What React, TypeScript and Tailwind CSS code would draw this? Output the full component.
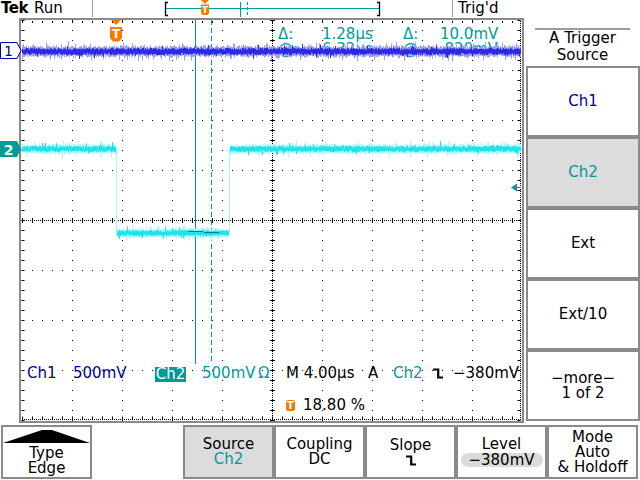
import React from "react";

const TEAL = "#009a9a";
const NAVY = "#0000a0";
const ORANGE = "#f57a00";

function makeRng(seed: number) {
  let s = seed >>> 0;
  return () => {
    s = (Math.imul(s, 1664525) + 1013904223) >>> 0;
    return s / 4294967296;
  };
}

type Seg = [number, number, number];

function band(segs: Seg[], seed: number, base: number, spread: number, spike: number): string {
  const r = makeRng(seed);
  const parts: string[] = [];
  for (const [x0, x1, c] of segs) {
    for (let x = x0; x <= x1; x++) {
      const o = (r() - 0.5) * 1.4;
      const up = base + r() * spread + (r() < spike ? 1.5 + r() * 2.5 : 0);
      const dn = base + r() * spread + (r() < spike ? 1.5 + r() * 2.5 : 0);
      parts.push(`M${x + 0.5} ${(c + o - up).toFixed(1)}V${(c + o + dn).toFixed(1)}`);
    }
  }
  return parts.join("");
}

const CH1: Seg[] = [[22, 520, 51.5]];
const CH2: Seg[] = [
  [22, 115, 149],
  [117, 228, 233],
  [230, 520, 149],
];

const ch1Halo = band(CH1, 7, 3.5, 2.5, 0.1);
const ch1Core = band(CH1, 11, 1.8, 1.8, 0.04);
const ch2Halo = band(CH2, 17, 3, 2.2, 0.1);
const ch2Core = band(CH2, 23, 1.6, 1.5, 0.04);

function FallEdge() {
  return (
    <svg width="10" height="11" viewBox="0 0 10 11" className="block">
      <path d="M0 1.5H5.2V9.5H10" fill="none" stroke="currentColor" strokeWidth="2.2" />
    </svg>
  );
}

function RecordBar() {
  return (
    <svg width={359} height={18} viewBox="93 0 359 18" className="block">
      <line x1={166} y1={8.5} x2={379} y2={8.5} stroke={TEAL} strokeWidth={1.2} />
      <path d="M168 2.5H165.5V15.5H168" fill="none" stroke="#000" strokeWidth={1.3} />
      <path d="M377 2.5H379.5V15.5H377" fill="none" stroke="#000" strokeWidth={1.3} />
      <line x1={240.5} y1={2} x2={240.5} y2={17} stroke={TEAL} strokeWidth={1} />
      <line x1={247.5} y1={2} x2={247.5} y2={17} stroke={TEAL} strokeWidth={1} strokeDasharray="3 2" />
      <polygon points="201,0 209,0 205,4" fill={ORANGE} />
      <path d="M201 4.5H209V13L207.5 15H202.5L201 13Z" fill={ORANGE} />
      <text x={205} y={13} fontSize={9} fontWeight="bold" fill="#fff" textAnchor="middle" fontFamily="DejaVu Sans">
        T
      </text>
    </svg>
  );
}

function Graticule() {
  const vx = [72, 122, 172, 222, 322, 372, 422, 472];
  const hy = [70, 120, 170, 270, 320, 370];
  return (
    <svg width={525} height={405} viewBox="0 18 525 405" className="block">
      {vx.map((x) => (
        <line key={`v${x}`} x1={x + 0.5} y1={20} x2={x + 0.5} y2={421} stroke="#000" strokeDasharray="1 9" />
      ))}
      {hy.map((y) => (
        <line key={`h${y}`} x1={22} y1={y + 0.5} x2={522} y2={y + 0.5} stroke="#000" strokeDasharray="1 9" />
      ))}
      <line x1={22} y1={220.5} x2={521} y2={220.5} stroke="#000" strokeDasharray="1 1" />
      <line x1={22} y1={220.5} x2={521} y2={220.5} stroke="#000" strokeWidth={5} strokeDasharray="1 9" />
      <line x1={272.5} y1={21} x2={272.5} y2={420} stroke="#000" strokeDasharray="1 1" />
      <line x1={272.5} y1={20} x2={272.5} y2={421} stroke="#000" strokeWidth={5} strokeDasharray="1 9" />
      <line x1={23} y1={20} x2={23} y2={421} stroke="#000" strokeWidth={3} strokeDasharray="1 9" />
      <line x1={520.5} y1={21} x2={520.5} y2={420} stroke="#000" strokeDasharray="1 1" />
      <line x1={519} y1={20} x2={519} y2={421} stroke="#000" strokeWidth={3} strokeDasharray="1 9" />
      <line x1={22} y1={22} x2={522} y2={22} stroke="#000" strokeWidth={2} strokeDasharray="1 9" />
      <line x1={22} y1={419.5} x2={521} y2={419.5} stroke="#000" strokeDasharray="1 1" />
      <line x1={22} y1={418} x2={522} y2={418} stroke="#000" strokeWidth={3} strokeDasharray="1 9" />
      <rect x={20} y={19} width={503} height={403} fill="none" stroke="#8a8a8a" strokeWidth={2} />
      <line x1={195.5} y1={20} x2={195.5} y2={364} stroke={TEAL} />
      <line x1={211.5} y1={20} x2={211.5} y2={364} stroke={TEAL} strokeDasharray="5 3" />
    </svg>
  );
}

function Traces() {
  return (
    <svg width={525} height={405} viewBox="0 18 525 405" className="absolute inset-0 block">
      <path d={ch1Halo} stroke="#9c9cff" strokeWidth={1} fill="none" />
      <path d={ch1Core} stroke="#2a2ae4" strokeWidth={1} fill="none" />
      <line x1={116.5} y1={149} x2={116.5} y2={233} stroke="#a8f6ff" />
      <line x1={229.5} y1={149} x2={229.5} y2={233} stroke="#a8f6ff" />
      <path d={ch2Halo} stroke="#a8fbff" strokeWidth={1} fill="none" />
      <path d={ch2Core} stroke="#1ee3ee" strokeWidth={1} fill="none" />
      <line x1={188} y1={231.5} x2={203} y2={231.5} stroke="#008080" />
      <line x1={204} y1={232.5} x2={219} y2={232.5} stroke="#008080" />
      <polygon points="0.5,42.5 17,42.5 21,50.5 17,58.5 0.5,58.5" fill="#fff" stroke={NAVY} />
      <text x={8.5} y={56} fontSize={14} fill={NAVY} textAnchor="middle" fontFamily="DejaVu Sans">
        1
      </text>
      <polygon points="0,141 17,141 21,149 17,157 0,157" fill={TEAL} />
      <text x={8.5} y={154.5} fontSize={14} fontWeight="bold" fill="#fff" textAnchor="middle" fontFamily="DejaVu Sans">
        2
      </text>
      <polygon points="110,19 122,19 116,25" fill={ORANGE} />
      <path d="M110 27H122V38L119 41.5H113L110 38Z" fill={ORANGE} />
      <text x={116} y={38} fontSize={12} fontWeight="bold" fill="#fff" textAnchor="middle" fontFamily="DejaVu Sans">
        T
      </text>
      <polygon points="511,187.5 517,183.5 517,191.5" fill={TEAL} />
      <line x1={517} y1={187.5} x2={521} y2={187.5} stroke={TEAL} />
    </svg>
  );
}

function SideBox({ children, className }: { children: React.ReactNode; className?: string }) {
  return (
    <div
      className={`h-[71px] w-[114px] border-2 border-[#8a8a8a] flex flex-col items-center justify-center text-center leading-[15px] ${className ?? ""}`}
    >
      {children}
    </div>
  );
}

function BottomBox({ children, className }: { children: React.ReactNode; className?: string }) {
  return (
    <div
      className={`h-[54px] w-[91px] border-2 border-[#8a8a8a] flex flex-col items-center justify-center text-center leading-[15px] ${className ?? ""}`}
    >
      {children}
    </div>
  );
}

export default function App() {
  return (
    <div className="w-[640px] h-[480px] bg-white overflow-hidden flex flex-col text-black text-[15px] leading-[15px] font-['DejaVu_Sans',sans-serif]">
      {/* header */}
      <div className="flex h-[18px] items-start shrink-0">
        <div className="w-[92px] flex pt-[1px] pl-[1px]">
          <span className="font-bold tracking-[-0.5px]">Tek</span>
          <span className="ml-[6px]">Run</span>
        </div>
        <div className="w-px h-[17px] bg-[#9c9c9c]" />
        <RecordBar />
        <div className="w-px h-[17px] bg-[#9c9c9c]" />
        <div className="pl-[5px] pt-[1px]">Trig'd</div>
      </div>

      {/* middle */}
      <div className="flex h-[405px] shrink-0">
        <div className="relative w-[525px] h-[405px]">
          <Graticule />
          <div className="absolute left-[278px] top-[9px] flex text-[#009a9a]">
            <span className="w-[44px]">Δ:</span>
            <span className="w-[81px]">1.28µs</span>
            <span className="w-[37px]">Δ:</span>
            <span className="w-[58px] text-right">10.0mV</span>
          </div>
          <div className="absolute left-[278px] top-[24px] flex text-[#009a9a]">
            <span className="w-[44px]">@:</span>
            <span className="w-[81px]">6.32µs</span>
            <span className="w-[37px]">@:</span>
            <span className="w-[58px] text-right whitespace-nowrap flex justify-end">−820mV</span>
          </div>
          <div className="absolute left-[27px] top-[348px] flex items-start whitespace-nowrap">
            <span className="w-[46px] text-[#0000a0]">Ch1</span>
            <span className="w-[82px] text-[#0000a0]">500mV</span>
            <span className="w-[31px] h-[15px] mt-[1px] bg-[#009a9a] text-white text-center">Ch2</span>
            <span className="w-[16px]" />
            <span className="w-[56px] text-[#009a9a]">500mV</span>
            <span className="w-[28px] text-[#009a9a]">Ω</span>
            <span className="w-[82px]">M 4.00µs</span>
            <span className="w-[25px]">A</span>
            <span className="w-[40px] text-[#009a9a]">Ch2</span>
            <span className="w-[20px] mt-[2px]">
              <FallEdge />
            </span>
            <span>−380mV</span>
          </div>
          <div className="absolute left-[286px] top-[380px] flex items-start whitespace-nowrap">
            <span className="w-[9px] h-[11px] mt-[2px] rounded-[2px] bg-[#f57a00] text-white text-[10px] leading-[11px] font-bold text-center">
              T
            </span>
            <span className="ml-[8px]">18.80 %</span>
          </div>
          <Traces />
        </div>

        {/* side menu */}
        <div className="w-[115px] flex flex-col">
          <div className="mt-[10px] mx-[10px] border-t-2 border-[#9c9c9c] text-center leading-[17px]">
            A Trigger
            <br />
            Source
          </div>
          <div className="mt-[2px] pl-px flex flex-col">
            <SideBox className="text-[#0000a0]">Ch1</SideBox>
            <SideBox className="bg-[#dcdcdc] text-[#009a9a]">Ch2</SideBox>
            <SideBox>Ext</SideBox>
            <SideBox>Ext/10</SideBox>
            <SideBox>
              <span>−more−</span>
              <span>1 of 2</span>
            </SideBox>
          </div>
        </div>
      </div>

      {/* bottom menu */}
      <div className="flex h-[57px] pt-[2px] shrink-0">
        <div className="ml-px h-[54px] w-[91px] border-2 border-[#8a8a8a] flex flex-col items-center">
          <svg width={87} height={16} viewBox="0 0 87 16" className="block">
            <polygon points="0,16 39,3 49,3 87,16" fill="#000" />
          </svg>
          <div className="mt-[3px] text-center leading-[15px]">
            Type
            <br />
            Edge
          </div>
        </div>
        <div className="w-[91px]" />
        <BottomBox className="bg-[#dcdcdc]">
          <span>Source</span>
          <span className="text-[#009a9a]">Ch2</span>
        </BottomBox>
        <BottomBox>
          <span>Coupling</span>
          <span>DC</span>
        </BottomBox>
        <BottomBox>
          <span>Slope</span>
          <span className="mt-[2px]">
            <FallEdge />
          </span>
        </BottomBox>
        <BottomBox>
          <span>Level</span>
          <span className="mt-px w-[82px] h-[14px] rounded-full bg-[#dadada] leading-[14px]">−380mV</span>
        </BottomBox>
        <BottomBox>
          <span>Mode</span>
          <span>Auto</span>
          <span className="whitespace-nowrap">&amp; Holdoff</span>
        </BottomBox>
      </div>
    </div>
  );
}
